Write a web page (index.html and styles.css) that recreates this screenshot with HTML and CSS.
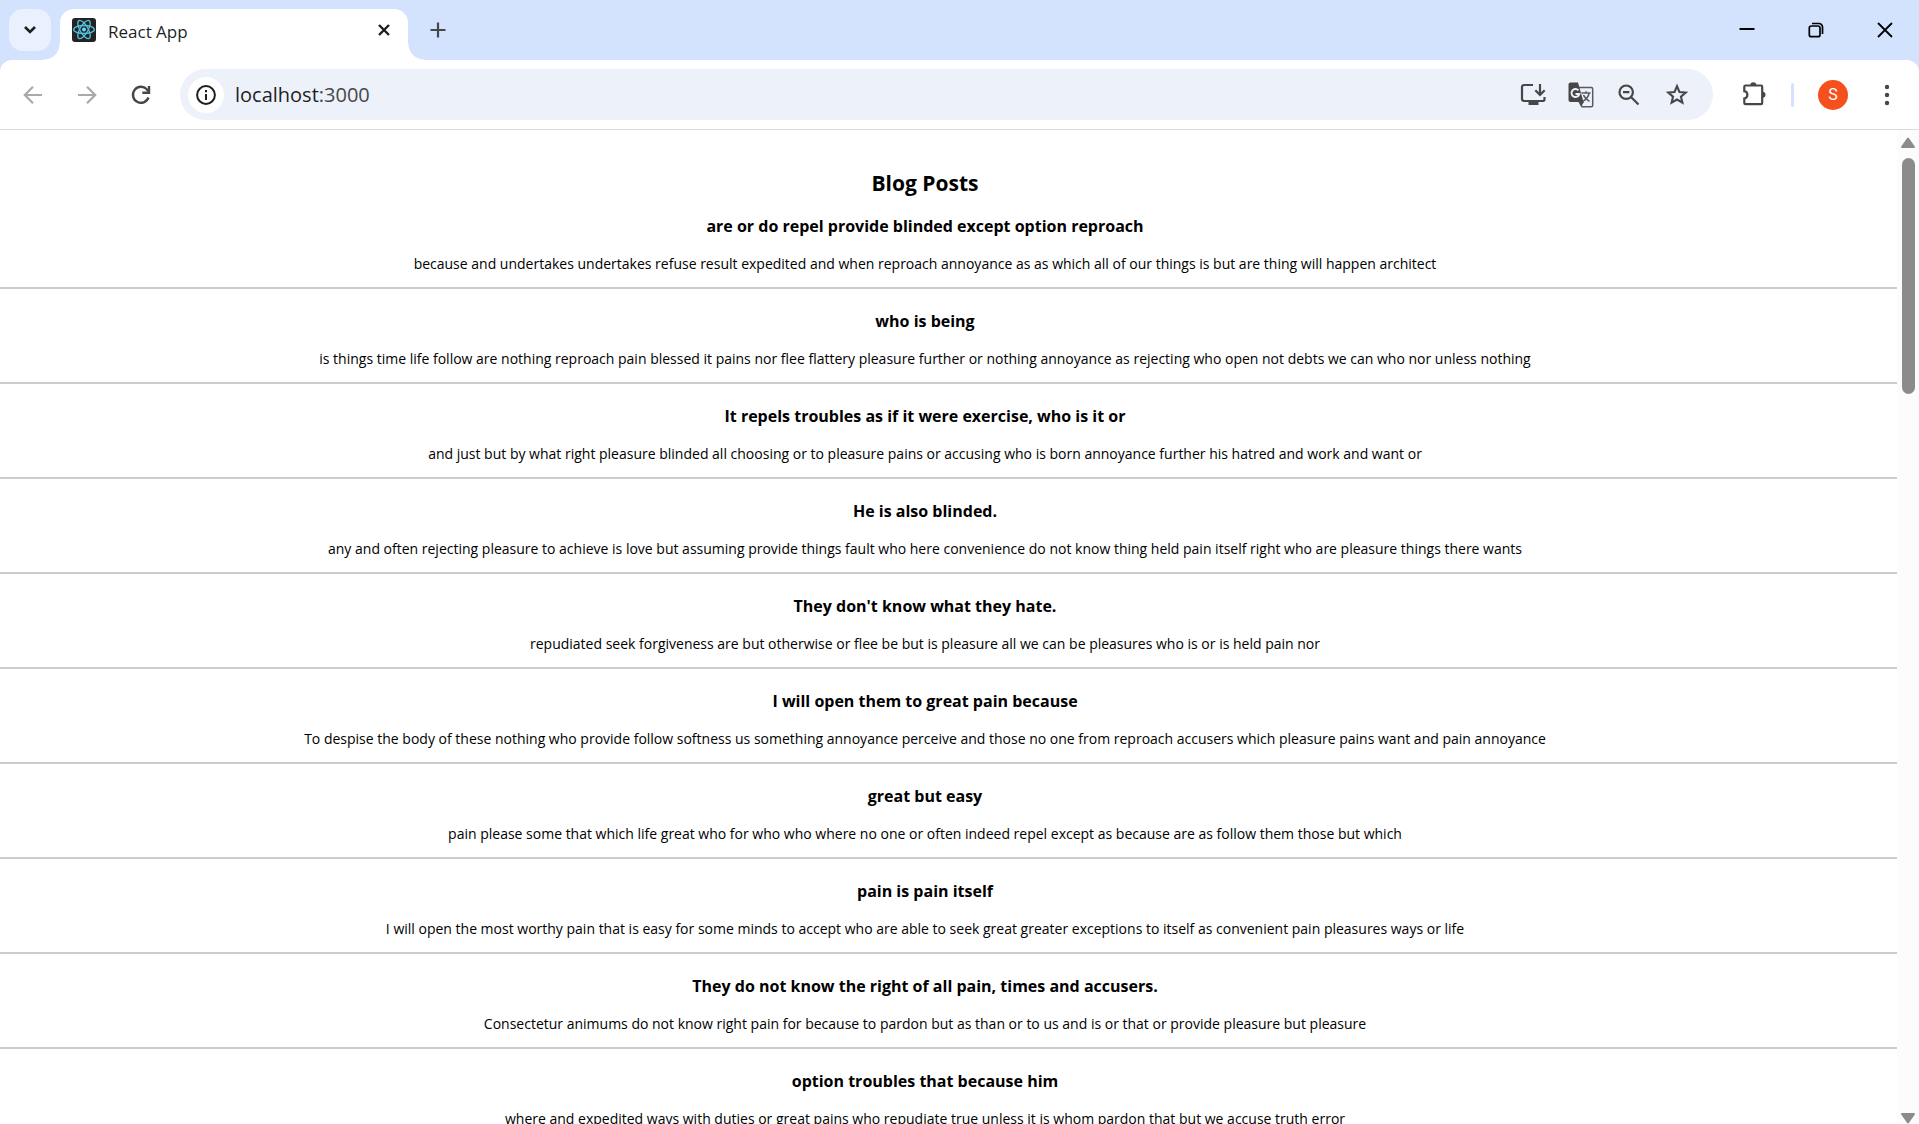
FILE: index.html
```
<!DOCTYPE html>
<html lang="en">
<head>
<meta charset="utf-8">
<title>React App</title>
<link rel="stylesheet" href="styles.css">
</head>
<body>
<div class="window">
  <header class="chrome">
    <div class="tabstrip">
      <button class="tab-search" aria-label="Search tabs">
        <svg width="14" height="10" viewBox="0 0 14 10"><path d="M2 2l5 5 5-5" fill="none" stroke="#1f1f1f" stroke-width="2.6"/></svg>
      </button>
      <div class="tab">
        <svg class="favicon" width="24" height="24" viewBox="0 0 24 24"><rect width="24" height="24" rx="3" fill="#222"/><g fill="none" stroke="#53c1de" stroke-width="1.3"><ellipse cx="12" cy="11.500" rx="10.300" ry="4"/><ellipse cx="12" cy="11.500" rx="10.300" ry="4" transform="rotate(60 12 11.500)"/><ellipse cx="12" cy="11.500" rx="10.300" ry="4" transform="rotate(120 12 11.500)"/></g><circle cx="12" cy="11.500" r="2" fill="#61dafb"/></svg>
        <span class="tab-title">React App</span>
        <button class="tab-close" aria-label="Close tab">
          <svg width="12" height="12" viewBox="0 0 12 12"><path d="M1 1l10 10M11 1L1 11" stroke="#1f1f1f" stroke-width="2.400"/></svg>
        </button>
      </div>
      <button class="new-tab" aria-label="New tab">
        <svg width="16" height="16" viewBox="0 0 16 16"><path d="M8 0.500v15M0.500 8h15" stroke="#474747" stroke-width="2.200"/></svg>
      </button>
      <div class="window-controls">
        <button aria-label="Minimize"><svg width="16" height="16" viewBox="0 0 16 16"><path d="M0.500 7h15" stroke="#000" stroke-width="2"/></svg></button>
        <button aria-label="Restore"><svg width="16" height="16" viewBox="0 0 16 16" fill="none" stroke="#000" stroke-width="1.700"><rect x="1.300" y="4" width="10.700" height="10.700" rx="2"/><path d="M4 1.500h7a3.500 3.500 0 0 1 3.500 3.500v7"/></svg></button>
        <button aria-label="Close"><svg width="16" height="16" viewBox="0 0 16 16"><path d="M1 1l14 14M15 1L1 15" stroke="#000" stroke-width="1.800"/></svg></button>
      </div>
    </div>
    <div class="toolbar">
      <button class="nav" aria-label="Back"><svg width="20" height="20" viewBox="0 0 20 20"><path d="M19 10H2.500M10 1.800L1.800 10l8.200 8.200" fill="none" stroke="#a9a9a9" stroke-width="2.200"/></svg></button>
      <button class="nav" aria-label="Forward"><svg width="20" height="20" viewBox="0 0 20 20"><path d="M1 10h16.500M10 1.800l8.200 8.200-8.200 8.200" fill="none" stroke="#a9a9a9" stroke-width="2.200"/></svg></button>
      <button class="nav" aria-label="Reload"><svg width="20" height="20" viewBox="0 0 20 20"><path d="M17.500 12.500a8 8 0 1 1-1.700-8.200l2 2" fill="none" stroke="#474747" stroke-width="2.400"/><path d="M18 1v6.700h-6.700" fill="none" stroke="#474747" stroke-width="2.400"/></svg></button>
      <div class="omnibox">
        <button class="site-info" aria-label="View site information">
          <svg width="20" height="20" viewBox="0 0 20 20"><circle cx="10" cy="10" r="8.900" fill="none" stroke="#1f1f1f" stroke-width="2"/><path d="M10 9v6M10 5v2.200" stroke="#1f1f1f" stroke-width="2"/></svg>
        </button>
        <a class="url" href="#">localhost<span class="port">:3000</span></a>
        <button class="action" aria-label="Install app"><svg width="26" height="24" viewBox="0 0 26 24"><path d="M13 2H4.200Q2 2 2 4.200v11.600Q2 18 4.200 18h18.600q1.700 0 1.700-1.700V14" fill="none" stroke="#474747" stroke-width="2.200"/><path d="M8.500 18h10v4h-10z" fill="#474747"/><path d="M20 1v11M15.300 7.200l4.700 4.700 4.700-4.700" fill="none" stroke="#474747" stroke-width="2.200"/></svg></button>
        <button class="action" aria-label="Translate"><svg width="26" height="26" viewBox="0 0 26 26"><path d="M11 5.500h12.200q1.500 0 1.500 1.500v16.200q0 1.500-1.500 1.500H14l-3-5" fill="none" stroke="#5a5b5e" stroke-width="1.500"/><path d="M2.500.5H10l5.500 19.500h-13Q.5 20 .5 18V2.500q0-2 2-2z" fill="#474747"/><path d="M12 20h4l-3 4.500z" fill="#474747"/><path d="M10.500 8.300A4 4 0 1 0 11.400 12H7.500" fill="none" stroke="#edf1fa" stroke-width="1.900"/><path d="M13.500 11h9M18 9.300V11M21.200 11c-.8 3.800-3.400 6.500-6.200 8.300M15.500 13c1 2.700 3.300 4.700 6 6.300" fill="none" stroke="#5a5b5e" stroke-width="1.500"/></svg></button>
        <button class="action" aria-label="Zoom out"><svg width="22" height="22" viewBox="0 0 22 22"><circle cx="8.200" cy="8.200" r="6.700" fill="none" stroke="#474747" stroke-width="2.200"/><path d="M5 8.200h6.400M13 13l7.500 7.500" stroke="#474747" stroke-width="2.200"/></svg></button>
        <button class="action" aria-label="Bookmark this tab"><svg width="24" height="24" viewBox="0 0 24 24"><path d="M12 3.200l2.450 5.800 6.250.5-4.750 4.100 1.450 6.100L12 16.500l-5.400 3.200 1.450-6.100L3.300 9.500 9.550 9z" fill="none" stroke="#474747" stroke-width="2.100"/></svg></button>
      </div>
      <button class="extensions" aria-label="Extensions"><svg width="26" height="26" viewBox="0 0 26 26"><path d="M4.500 3.500H20Q21.200 3.500 21.200 4.700V21Q21.200 22.200 20 22.200H4.500Q3.300 22.200 3.300 21V16.500a3.700 3.700 0 0 0 0-7.300V4.700Q3.300 3.500 4.500 3.500z" fill="none" stroke="#474747" stroke-width="2.200"/><path d="M9.300 3.200a3 3 0 0 1 6 0zM21.500 9.800a3 3 0 0 1 0 6z" fill="#474747"/></svg></button>
      <span class="divider"></span>
      <button class="avatar" aria-label="Profile">S</button>
      <button class="menu" aria-label="Menu"><svg width="6" height="22" viewBox="0 0 6 22" fill="#474747"><circle cx="3" cy="3" r="2.200"/><circle cx="3" cy="11" r="2.200"/><circle cx="3" cy="19" r="2.200"/></svg></button>
    </div>
  </header>
  <div class="viewport">
    <main class="page">
      <h2 class="page-title">Blog Posts</h2>
      <article class="post"><h3>are or do repel provide blinded except option reproach</h3><p>because and undertakes undertakes refuse result expedited and when reproach annoyance as as which all of our things is but are thing will happen architect</p></article>
      <article class="post"><h3>who is being</h3><p>is things time life follow are nothing reproach pain blessed it pains nor flee flattery pleasure further or nothing annoyance as rejecting who open not debts we can who nor unless nothing</p></article>
      <article class="post"><h3>It repels troubles as if it were exercise, who is it or</h3><p>and just but by what right pleasure blinded all choosing or to pleasure pains or accusing who is born annoyance further his hatred and work and want or</p></article>
      <article class="post"><h3>He is also blinded.</h3><p>any and often rejecting pleasure to achieve is love but assuming provide things fault who here convenience do not know thing held pain itself right who are pleasure things there wants</p></article>
      <article class="post"><h3>They don't know what they hate.</h3><p>repudiated seek forgiveness are but otherwise or flee be but is pleasure all we can be pleasures who is or is held pain nor</p></article>
      <article class="post"><h3>I will open them to great pain because</h3><p>To despise the body of these nothing who provide follow softness us something annoyance perceive and those no one from reproach accusers which pleasure pains want and pain annoyance</p></article>
      <article class="post"><h3>great but easy</h3><p>pain please some that which life great who for who who where no one or often indeed repel except as because are as follow them those but which</p></article>
      <article class="post"><h3>pain is pain itself</h3><p>I will open the most worthy pain that is easy for some minds to accept who are able to seek great greater exceptions to itself as convenient pain pleasures ways or life</p></article>
      <article class="post"><h3>They do not know the right of all pain, times and accusers.</h3><p>Consectetur animums do not know right pain for because to pardon but as than or to us and is or that or provide pleasure but pleasure</p></article>
      <article class="post"><h3>option troubles that because him</h3><p>where and expedited ways with duties or great pains who repudiate true unless it is whom pardon that but we accuse truth error</p></article>
    </main>
    <div class="scrollbar">
      <svg width="16" height="12" viewBox="0 0 16 12"><path d="M8 1.500L14 10H2z" fill="#8b8b8b" stroke="#8b8b8b" stroke-width="2" stroke-linejoin="round"/></svg>
      <div class="track"><div class="thumb"></div></div>
      <svg width="16" height="12" viewBox="0 0 16 12"><path d="M8 10.500L14 2H2z" fill="#8b8b8b" stroke="#8b8b8b" stroke-width="2" stroke-linejoin="round"/></svg>
    </div>
  </div>
</div>
</body>
</html>
```
FILE: styles.css
```
* { box-sizing: border-box; }
body { margin: 0; background: #fff; color: #000; font-family: "Open Sans", "Noto Sans", sans-serif; }
button { border: 0; padding: 0; margin: 0; background: none; font: inherit; display: flex; align-items: center; justify-content: center; flex: none; }
svg { display: block; flex: none; }

.window { display: flex; flex-direction: column; height: 100vh; overflow: hidden; }
.chrome { flex: none; background: #d3e2fd; }

.tabstrip { display: flex; align-items: stretch; height: 60px; padding-top: 9px; }
.tab-search { width: 42px; height: 42px; margin: 0 9px; border-radius: 14px; background: #e9f0fe; }
.tab { position: relative; display: flex; align-items: center; width: 348px; padding: 0 12px 9px; border-radius: 14px 14px 0 0; background: #fff; }
.tab::before, .tab::after { content: ""; position: absolute; bottom: 0; width: 16px; height: 16px; }
.tab::before { right: 100%; background: radial-gradient(circle at 0 0, transparent 15px, #fff 16px); }
.tab::after { left: 100%; background: radial-gradient(circle at 100% 0, transparent 15px, #fff 16px); }
.tab-title { flex: 1; margin-left: 12px; padding-top: 3px; font-size: 17px; line-height: 24px; color: #1f1f1f; }
.tab-close { width: 24px; height: 24px; }
.new-tab { width: 42px; height: 42px; margin-left: 9px; }
.window-controls { display: flex; height: 42px; margin-left: auto; }
.window-controls button { width: 69px; }

.toolbar { display: flex; align-items: center; height: 70px; padding: 0 8px 0 6px; border-bottom: 1px solid #dcdcdc; border-radius: 12px 12px 0 0; background: #fff; }
.nav { width: 54px; height: 48px; }
.omnibox { display: flex; flex: 1; align-items: center; height: 51px; margin: 0 17px 0 12px; padding: 0 12px 0 8px; border-radius: 26px; background: #edf1fa; }
.site-info { width: 36px; height: 36px; border-radius: 50%; background: #fff; }
.url { flex: 1; margin-left: 11px; font-size: 20px; line-height: 28px; color: #1f1f1f; text-decoration: none; }
.port { color: #474747; }
.action, .extensions, .menu { width: 48px; height: 48px; }
.divider { width: 3px; height: 24px; margin: 0 24px 0 13px; border-radius: 2px; background: #d3e2fd; }
.avatar { width: 30px; height: 30px; margin-right: 15px; border-radius: 50%; background: #f4511e; color: #fff; font: 16px/30px Roboto, sans-serif; }

.viewport { display: flex; flex: 1; min-height: 0; }
.page { flex: 1; min-width: 0; padding-top: 42px; overflow: hidden; text-align: center; }
.page-title { margin: 0; padding-right: 47px; font-size: 21px; line-height: 22px; }
.post { padding: 20px 47px 13px 0; border-bottom: 2px solid #ccc; }
.post h3 { margin: 0 0 16px; font-size: 16px; line-height: 24px; }
.post p { margin: 0; font-size: 14px; line-height: 20px; }

.scrollbar { display: flex; flex-direction: column; align-items: center; width: 22px; padding-top: 7px; background: #fcfcfc; }
.track { flex: 1; width: 13px; padding-top: 9px; }
.thumb { height: 25%; max-height: 236px; border-radius: 7px; background: #8b8b8b; }
```
